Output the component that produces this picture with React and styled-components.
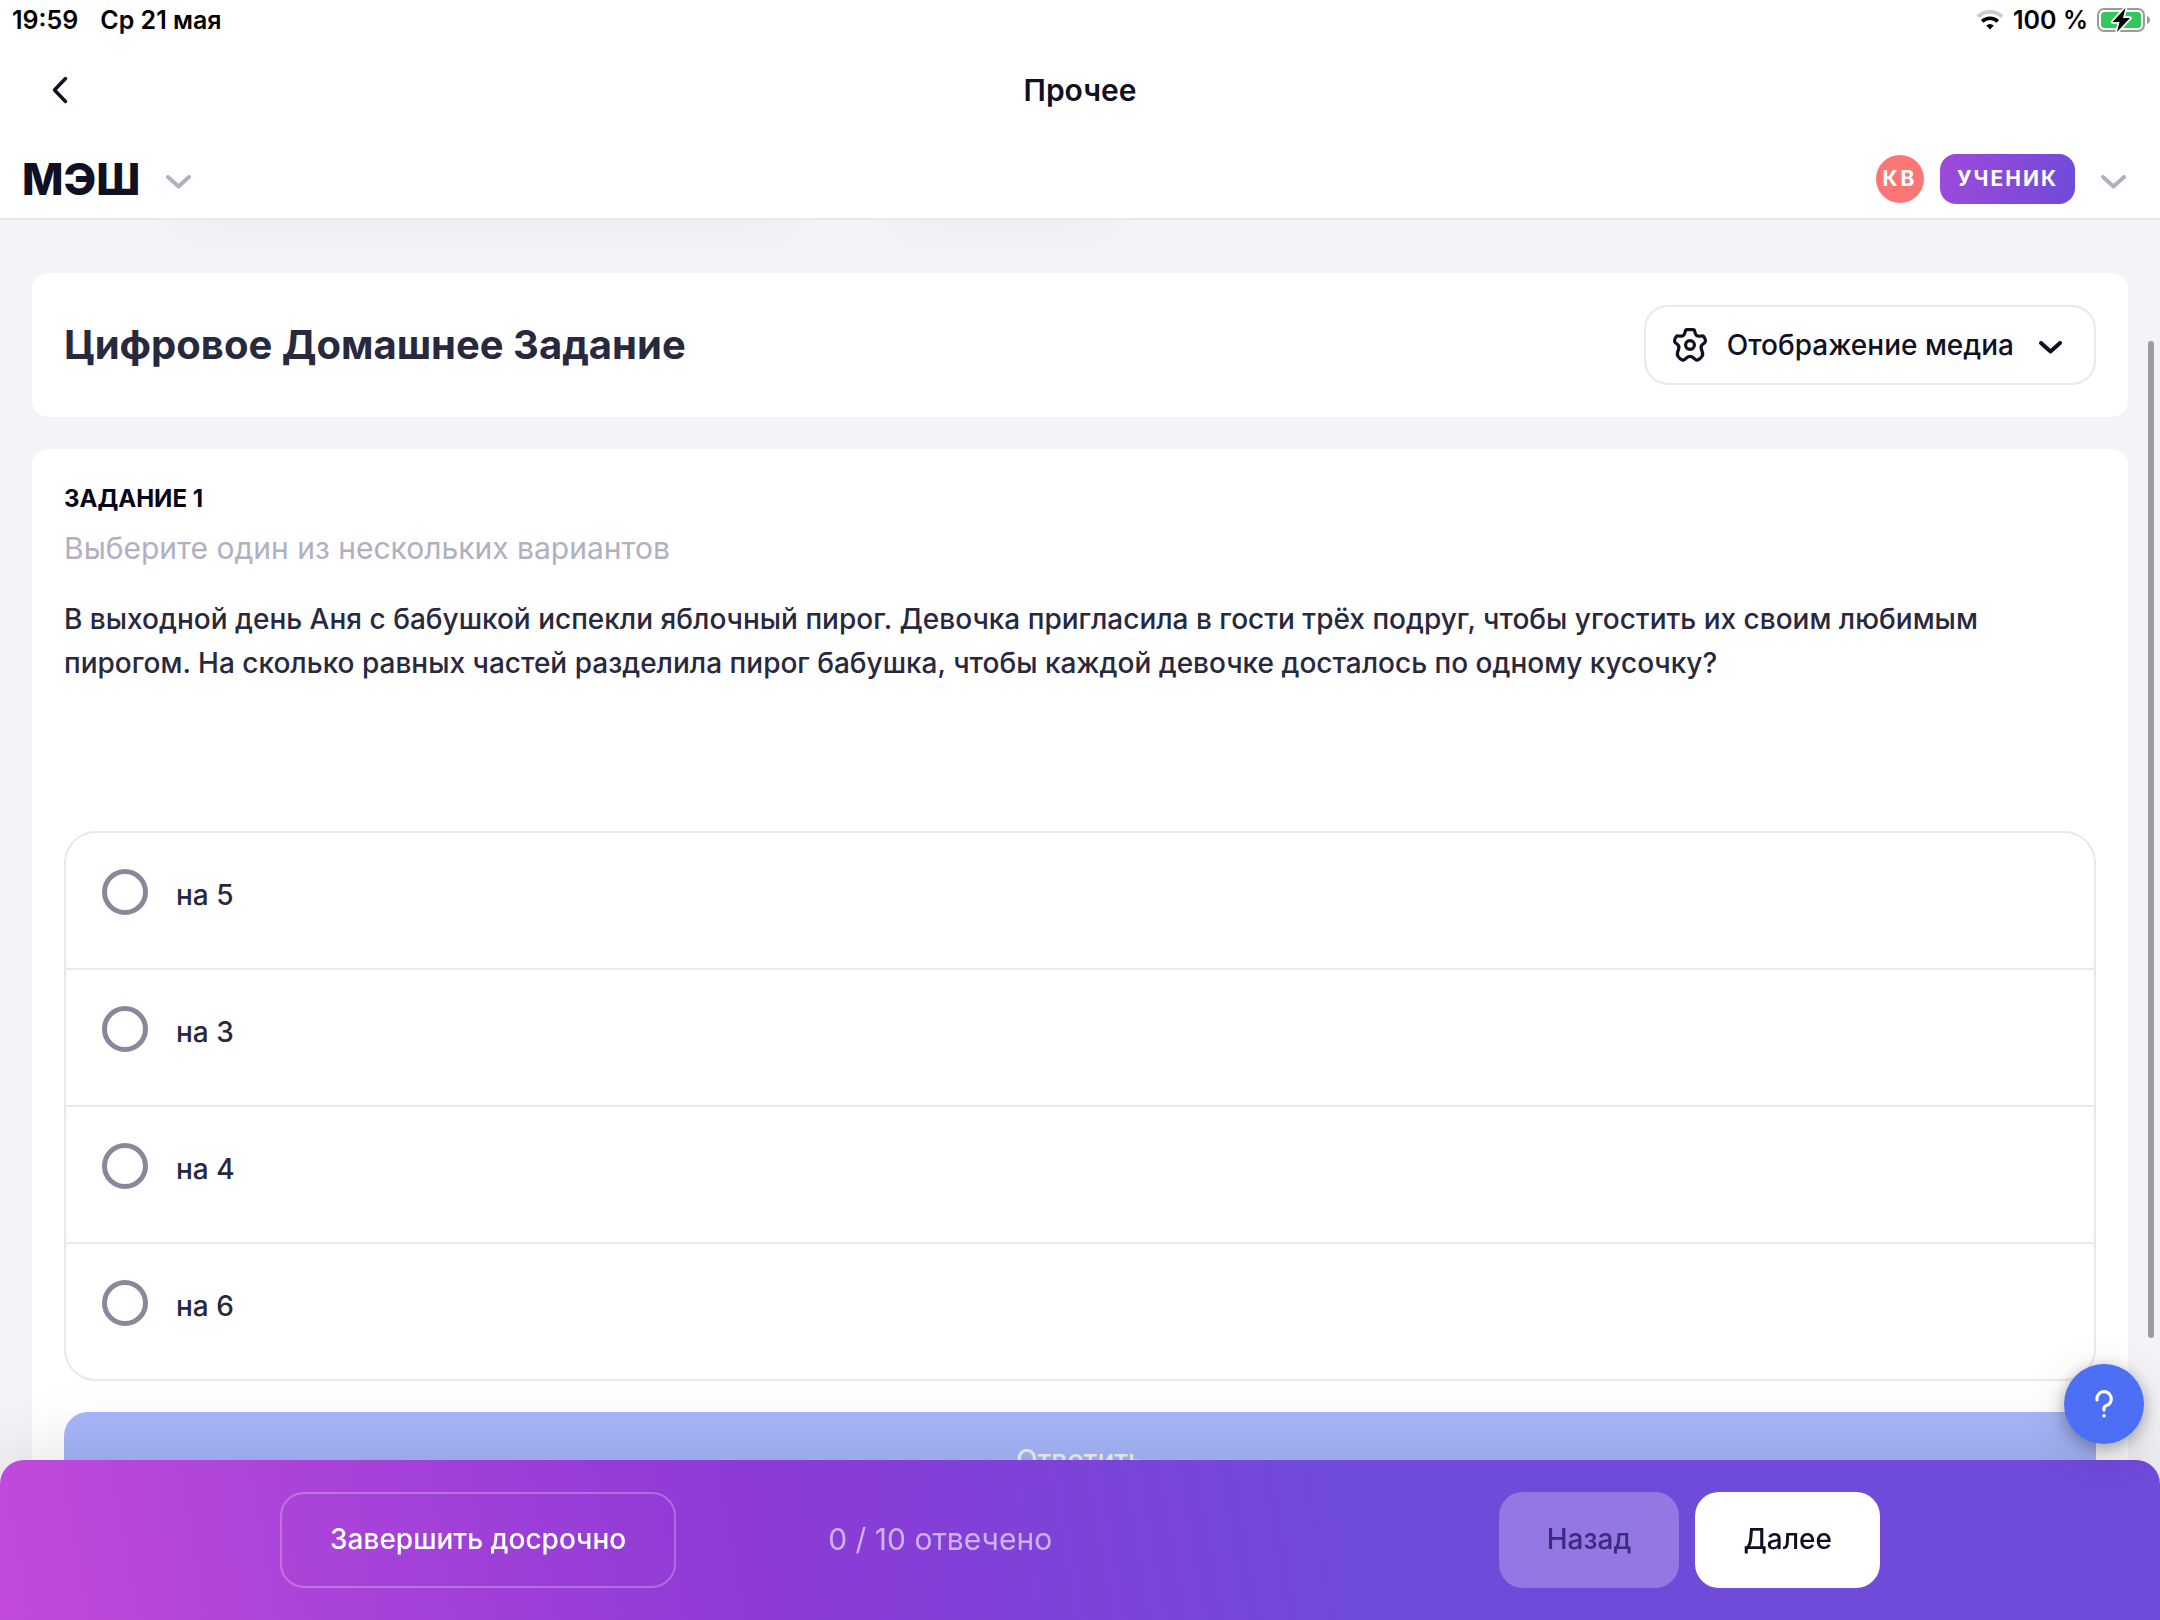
import React, { useState } from "react";
import styled, { createGlobalStyle } from "styled-components";

const GlobalStyle = createGlobalStyle`
  * {
    box-sizing: border-box;
  }
  body {
    margin: 0;
    background: #f3f3f8;
    color: #28283e;
    font-family: Inter, "Noto Sans", sans-serif;
    font-size: 28px;
    line-height: 44px;
  }
  button, select, input {
    font: inherit;
    color: inherit;
  }
`;

const Page = styled.div`
  height: 100vh;
  display: flex;
  flex-direction: column;
  overflow: hidden;
`;

const Top = styled.div`
  flex: none;
  background: #fff;
  border-bottom: 2px solid #e8e8ee;
`;

const StatusBar = styled.div`
  display: flex;
  align-items: center;
  justify-content: space-between;
  height: 40px;
  padding: 0 9px 0 12px;
  color: #000;
  font-size: 25px;
  font-weight: 600;
  line-height: 40px;
`;

const StatusGroup = styled.div`
  display: flex;
  align-items: center;
  gap: ${(p) => p.$gap}px;
`;

const NavBar = styled.nav`
  display: grid;
  grid-template-columns: 1fr auto 1fr;
  align-items: center;
  height: 100px;
  padding: 0 40px;
  color: #101024;
`;

const NavTitle = styled.div`
  font-size: 30px;
  font-weight: 600;
`;

const IconButton = styled.button`
  display: flex;
  align-items: center;
  justify-content: center;
  justify-self: start;
  width: 40px;
  height: 48px;
  padding: 0;
  border: none;
  background: none;
  color: #101024;
`;

const MenuButton = styled(IconButton)`
  width: 44px;
  padding-top: 5px;
  color: #b0b0c0;
`;

const Header = styled.header`
  display: flex;
  align-items: center;
  justify-content: space-between;
  height: 78px;
  padding: 0 25px 0 22px;
`;

const HeaderSide = styled.div`
  display: flex;
  align-items: center;
  gap: 16px;
`;

const Logo = styled.a`
  color: #101024;
  font-size: 44px;
  font-weight: 800;
  text-decoration: none;
`;

const Avatar = styled.div`
  width: 48px;
  height: 48px;
  border-radius: 50%;
  background: #fc7676;
  color: #fff;
  font-size: 21px;
  font-weight: 700;
  letter-spacing: 3px;
  line-height: 48px;
  text-align: center;
`;

const Role = styled.div`
  height: 50px;
  padding: 0 17px;
  border-radius: 16px;
  background: linear-gradient(105deg, #9f4ada, #704ad9);
  color: #fff;
  font-size: 21px;
  font-weight: 700;
  letter-spacing: 2px;
  line-height: 50px;
`;

const Main = styled.main`
  flex: 1;
  min-height: 0;
  overflow: hidden;
  padding: 0 32px;
`;

const Tabs = styled.div`
  display: flex;
  gap: 96px;
  height: 53px;
  padding: 0 144px;
`;

const TabShadow = styled.div`
  width: ${(p) => p.$width}px;
  height: 0;
  box-shadow: 0 0 40px 4px rgba(40, 40, 62, 0.1);
`;

const Card = styled.section`
  padding: 32px;
  border-radius: 16px;
  background: #fff;
  margin-bottom: 32px;
`;

const TitleCard = styled(Card)`
  display: flex;
  align-items: center;
  justify-content: space-between;
`;

const Title = styled.h1`
  margin: 0;
  font-size: 40px;
  font-weight: 700;
`;

const MediaButton = styled.button`
  display: flex;
  align-items: center;
  height: 80px;
  padding: 0 32px 0 26px;
  border: 2px solid #e8e8ee;
  border-radius: 24px;
  background: #fff;
  color: #101024;
  font-weight: 500;

  span {
    margin: 0 25px 0 19px;
  }

  svg:last-child {
    margin-top: 4px;
  }
`;

const TaskName = styled.h2`
  margin: 0 0 11px;
  color: #05051a;
  font-size: 24px;
  font-weight: 700;
  line-height: 36px;
`;

const Hint = styled.p`
  margin: 0 0 29px;
  color: #b0b0c0;
  font-size: 30px;
  line-height: 40px;
`;

const Question = styled.p`
  margin: 0 0 146px;
  padding-right: 64px;
  font-weight: 500;
`;

const Options = styled.div`
  border: 2px solid #e8e8ee;
  border-radius: 32px;
`;

const Option = styled.label`
  display: flex;
  align-items: flex-start;
  gap: 28px;
  padding: 36px 36px 51px;
  font-weight: 500;

  & + & {
    border-top: 2px solid #e8e8ee;
  }

  span {
    padding-top: 4px;
  }
`;

const Radio = styled.input`
  appearance: none;
  width: 46px;
  height: 46px;
  margin: 0;
  border: 5px solid #88889c;
  border-radius: 50%;

  &:checked {
    border: 14px solid #4c6ff5;
  }
`;

const AnswerButton = styled.button`
  display: block;
  width: 100%;
  height: 96px;
  margin-top: 31px;
  border: none;
  border-radius: 24px;
  background: #a6b6fa;
  color: #f2f2f2;
  font-weight: 500;
`;

const ScrollThumb = styled.div`
  position: fixed;
  top: 341px;
  right: 6px;
  bottom: 282px;
  width: 6px;
  border-radius: 3px;
  background: #9d9d9f;
`;

const Footer = styled.footer`
  position: fixed;
  left: 0;
  right: 0;
  bottom: 0;
  height: 160px;
  padding: 32px;
  border-radius: 24px 24px 0 0;
  background: linear-gradient(80deg, #c14adc, #8d3ad6 35%, #704ad9 62%);
  box-shadow: 0 0 80px rgba(0, 0, 0, 0.14);
`;

const FooterInner = styled.div`
  display: flex;
  align-items: center;
  justify-content: space-between;
  max-width: 1600px;
  margin: 0 auto;
`;

const FooterGroup = styled.div`
  display: flex;
  align-items: center;
  gap: ${(p) => p.$gap}px;
`;

const FooterButton = styled.button`
  height: 96px;
  padding: 0 48px 2px;
  border: none;
  border-radius: 24px;
  background: #fff;
  color: #101024;
  font-weight: 500;

  &:disabled {
    background: rgba(255, 255, 255, 0.25);
    color: #3c2a80;
  }
`;

const FinishButton = styled(FooterButton)`
  border: 2px solid rgba(255, 255, 255, 0.25);
  background: transparent;
  color: #fff;
`;

const Counter = styled.div`
  padding-bottom: 2px;
  color: rgba(255, 255, 255, 0.6);
  font-size: 30px;
`;

const HelpButton = styled.button`
  position: fixed;
  right: 16px;
  bottom: 176px;
  display: flex;
  align-items: center;
  justify-content: center;
  width: 80px;
  height: 80px;
  padding: 0;
  border: none;
  border-radius: 50%;
  background: #4c6ff5;
  color: #fff;
  box-shadow: 0 4px 16px rgba(0, 0, 0, 0.3), 0 8px 48px rgba(0, 0, 0, 0.12);
`;

const ChevronDown = ({ width = 25, height = 14, stroke = 4 }) => (
  <svg
    width={width}
    height={height}
    viewBox={`0 0 ${width} ${height}`}
    fill="none"
    stroke="currentColor"
    strokeWidth={stroke}
    strokeLinecap="round"
    strokeLinejoin="round"
  >
    <path d={`M2 2 L${width / 2} ${height - 2.5} L${width - 2} 2`} />
  </svg>
);

const WifiIcon = () => (
  <svg width="28" height="20" viewBox="0 0 28 20" fill="none">
    <path d="M1.8 6.8 A17.6 17.6 0 0 1 26.2 6.8" stroke="#ccc" strokeWidth="3.6" />
    <path d="M6.2 11.4 A11.2 11.2 0 0 1 21.8 11.4" stroke="#000" strokeWidth="3.6" />
    <path d="M10.2 15.6 A5.8 5.8 0 0 1 17.8 15.6 L14 19.6 Z" fill="#000" />
  </svg>
);

const BatteryIcon = () => (
  <svg width="54" height="26" viewBox="0 0 54 26">
    <rect x="1" y="2" width="46" height="22" rx="6" fill="#fff" stroke="#9b9b9b" strokeWidth="2" />
    <rect x="4" y="5" width="40" height="16" rx="3.5" fill="#34c759" />
    <path d="M50 9 Q53 10 53 13 T50 17 Z" fill="#9b9b9b" />
    <path
      d="M28.5 1 L15.5 15 H22.5 L20 25 L33 11 H26 Z"
      fill="#000"
      stroke="#fff"
      strokeWidth="3.5"
      strokeLinejoin="round"
      paintOrder="stroke"
    />
  </svg>
);

const GearIcon = () => (
  <svg
    width="36"
    height="36"
    viewBox="0 0 36 36"
    fill="none"
    stroke="currentColor"
    strokeWidth="3.2"
    strokeLinejoin="round"
  >
    <path d="M15.2 2.6 H20.8 Q22.6 2.6 22.8 4.6 Q23.4 9.6 28 9.2 Q30.8 8.5 31.8 9.6 Q34 12.8 33.2 14.8 Q32.8 15.8 31 17 Q28 19 29.6 22.8 Q31.4 27 30.2 29 Q28.6 31.8 25.6 33 Q24 33.5 22.6 31.8 Q18 27 13.4 31.8 Q12 33.5 10.4 33 Q7.4 31.8 5.8 29 Q4.6 27 6.4 22.8 Q8 19 5 17 Q3.2 15.8 2.8 14.8 Q2 12.8 4.2 9.6 Q5.2 8.5 8 9.2 Q12.6 9.6 13.2 4.6 Q13.4 2.6 15.2 2.6 Z" />
    <circle cx="18" cy="18" r="4.4" />
  </svg>
);

const options = ["на 5", "на 3", "на 4", "на 6"];

const App = () => {
  const [answer, setAnswer] = useState(null);

  return (
    <>
      <GlobalStyle />
      <Page>
        <Top>
          <StatusBar>
            <StatusGroup $gap={22}>
              <span>19:59</span>
              <span>Ср 21 мая</span>
            </StatusGroup>
            <StatusGroup $gap={9}>
              <WifiIcon />
              <span>100 %</span>
              <BatteryIcon />
            </StatusGroup>
          </StatusBar>
          <NavBar>
            <IconButton aria-label="Назад">
              <svg
                width="16"
                height="28"
                viewBox="0 0 16 28"
                fill="none"
                stroke="currentColor"
                strokeWidth="3.5"
                strokeLinecap="round"
                strokeLinejoin="round"
              >
                <path d="M13.5 2.5 L2.5 14 L13.5 25.5" />
              </svg>
            </IconButton>
            <NavTitle>Прочее</NavTitle>
          </NavBar>
          <Header>
            <HeaderSide>
              <Logo href="#">МЭШ</Logo>
              <MenuButton aria-label="Меню">
                <ChevronDown />
              </MenuButton>
            </HeaderSide>
            <HeaderSide>
              <Avatar>КВ</Avatar>
              <Role>УЧЕНИК</Role>
              <MenuButton aria-label="Профиль">
                <ChevronDown />
              </MenuButton>
            </HeaderSide>
          </Header>
        </Top>

        <Main>
          <Tabs>
            <TabShadow $width={620} />
            <TabShadow $width={220} />
          </Tabs>
          <TitleCard>
            <Title>Цифровое Домашнее Задание</Title>
            <MediaButton>
              <GearIcon />
              <span>Отображение медиа</span>
              <ChevronDown width={23} height={13} stroke={4} />
            </MediaButton>
          </TitleCard>
          <Card>
            <TaskName>ЗАДАНИЕ 1</TaskName>
            <Hint>Выберите один из нескольких вариантов</Hint>
            <Question>
              В выходной день Аня с бабушкой испекли яблочный пирог. Девочка пригласила в гости трёх подруг, чтобы
              угостить их своим любимым пирогом. На сколько равных частей разделила пирог бабушка, чтобы каждой
              девочке досталось по одному кусочку?
            </Question>
            <Options>
              {options.map((text) => (
                <Option key={text}>
                  <Radio
                    type="radio"
                    name="answer"
                    checked={answer === text}
                    onChange={() => setAnswer(text)}
                  />
                  <span>{text}</span>
                </Option>
              ))}
            </Options>
            <AnswerButton disabled={!answer}>Ответить</AnswerButton>
          </Card>
        </Main>
      </Page>

      <ScrollThumb />
      <Footer>
        <FooterInner>
          <FooterGroup $gap={152}>
            <FinishButton>Завершить досрочно</FinishButton>
            <Counter>0 / 10 отвечено</Counter>
          </FooterGroup>
          <FooterGroup $gap={16}>
            <FooterButton disabled>Назад</FooterButton>
            <FooterButton>Далее</FooterButton>
          </FooterGroup>
        </FooterInner>
      </Footer>
      <HelpButton aria-label="Помощь">
        <svg width="20" height="32" viewBox="0 0 20 32" fill="none">
          <path
            d="M3 12 A7.2 7.2 0 1 1 12.4 17.6 Q10 18.4 10 20.4 V22"
            stroke="currentColor"
            strokeWidth="3.2"
            strokeLinecap="round"
          />
          <circle cx="10" cy="27.8" r="1.8" fill="currentColor" />
        </svg>
      </HelpButton>
    </>
  );
};

export default App;
